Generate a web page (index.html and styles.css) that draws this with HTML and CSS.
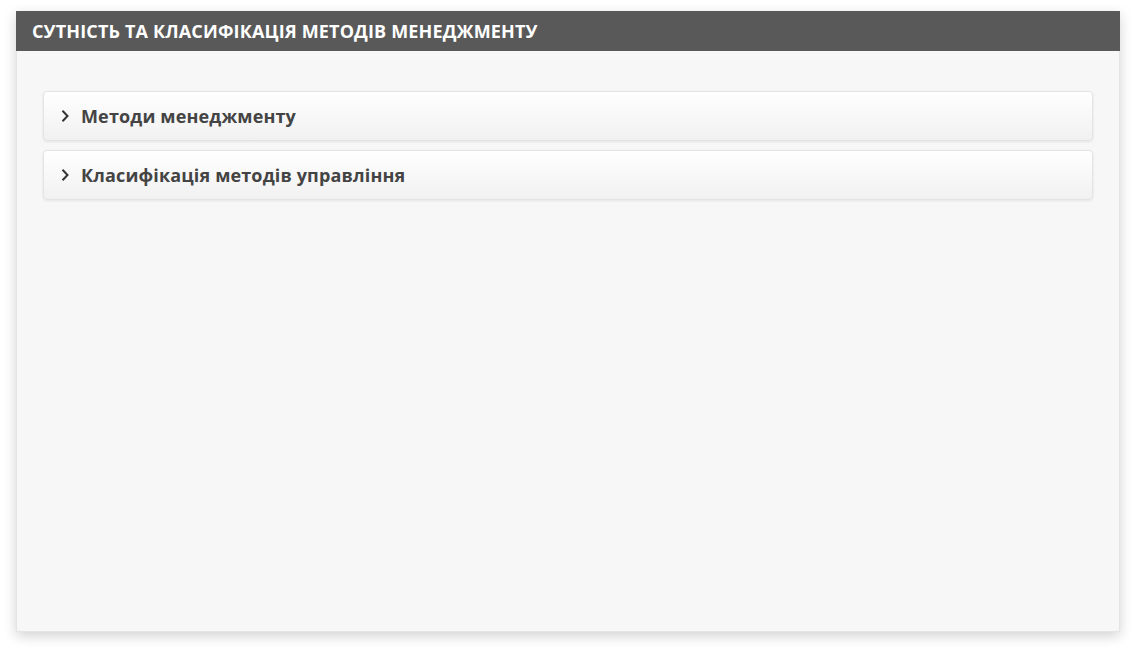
FILE: index.html
```html
<!DOCTYPE html>
<html lang="uk">
<head>
<meta charset="utf-8">
<title>Сутність та класифікація методів менеджменту</title>
<link rel="stylesheet" href="styles.css">
</head>
<body>
<div class="panel">
  <div class="panel-header">Сутність та класифікація методів менеджменту</div>
  <div class="panel-body">
    <div class="acc-item">
      <svg class="chev" width="10" height="14" viewBox="0 0 10 14"><path d="M2.5 1.8 L7.5 7 L2.5 12.2" fill="none" stroke="#333" stroke-width="2"/></svg>
      <span class="acc-title">Методи менеджменту</span>
    </div>
    <div class="acc-item">
      <svg class="chev" width="10" height="14" viewBox="0 0 10 14"><path d="M2.5 1.8 L7.5 7 L2.5 12.2" fill="none" stroke="#333" stroke-width="2"/></svg>
      <span class="acc-title">Класифікація методів управління</span>
    </div>
  </div>
</div>
</body>
</html>
```
FILE: styles.css
```css
html, body { margin: 0; padding: 0; background: #ffffff; }
body { padding: 11px 16px 21px 16px; font-family: "Open Sans", "Noto Sans", sans-serif; }
.panel {
  height: 621px;
  background: #f7f7f7;
  box-shadow: 0 4px 12px rgba(0,0,0,0.18);
  border: 1px solid #e4e4e4;
  border-top: none;
  box-sizing: border-box;
  display: flex;
  flex-direction: column;
}
.panel-header {
  height: 40px;
  background: #595959;
  color: #ffffff;
  font-weight: 700;
  font-size: 18px;
  text-transform: uppercase;
  display: flex;
  align-items: center;
  padding-left: 16px;
  letter-spacing: 0.15px;
  margin: 0 -1px;
}
.panel-body {
  padding: 40px 26px 0 26px;
  display: flex;
  flex-direction: column;
  gap: 9px;
}
.acc-item {
  height: 50px;
  box-sizing: border-box;
  border: 1px solid #e3e3e3;
  border-radius: 4px;
  background: linear-gradient(#ffffff, #f1f1f1);
  box-shadow: 0 1px 3px rgba(0,0,0,0.08);
  display: flex;
  align-items: center;
  padding-left: 16px;
}
.chev { margin-right: 11px; }
.acc-title {
  font-size: 18px;
  font-weight: 700;
  color: #444444;
  letter-spacing: 0.15px;
}
```
